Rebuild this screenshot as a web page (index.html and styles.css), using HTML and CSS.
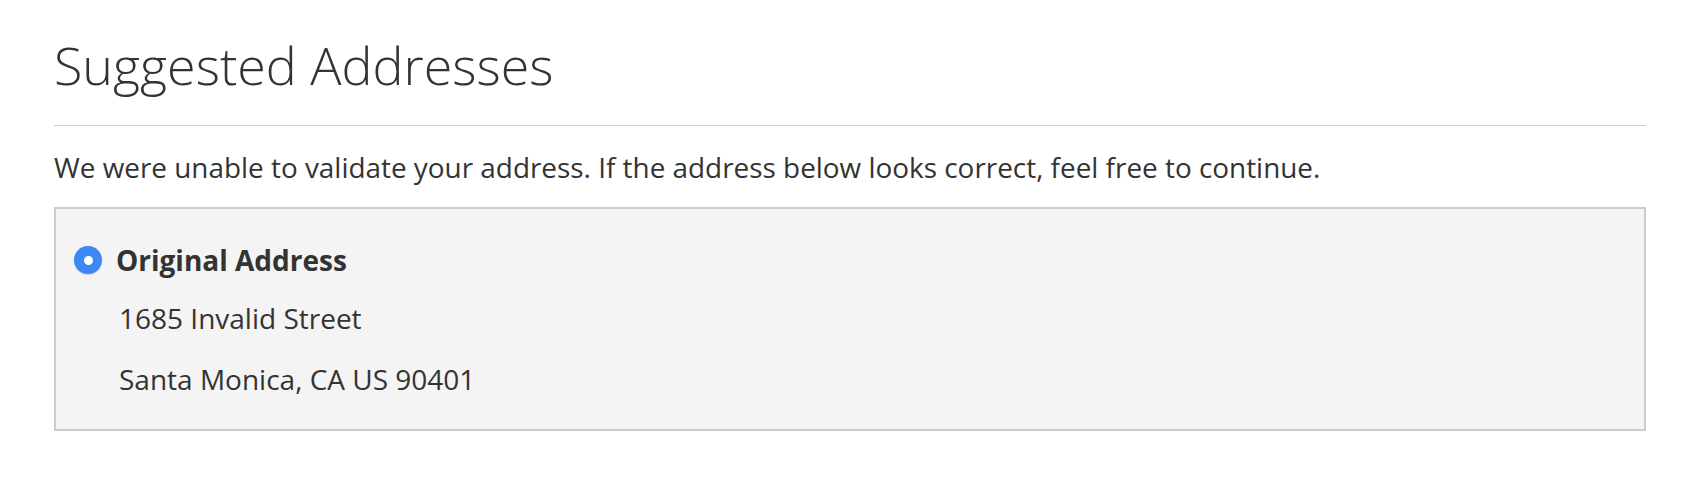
FILE: index.html
```html
<!DOCTYPE html>
<html lang="en">
<head>
<meta charset="utf-8">
<title>Suggested Addresses</title>
<link rel="stylesheet" href="styles.css">
</head>
<body>
<div class="page">
  <h1 class="title">Suggested Addresses</h1>
  <p class="message">We were unable to validate your address. If the address below looks correct, feel free to continue.</p>
  <div class="option-box">
    <label class="option">
      <span class="radio"><span class="radio-dot"></span></span>
      <span class="option-label">Original Address</span>
    </label>
    <div class="address">
      <div class="address-line">1685 Invalid Street</div>
      <div class="address-line">Santa Monica, CA US 90401</div>
    </div>
  </div>
</div>
</body>
</html>
```

FILE: styles.css
```css
html, body {
  margin: 0;
  padding: 0;
  background: #ffffff;
}
body {
  font-family: "Open Sans", "Liberation Sans", sans-serif;
  color: #333333;
}
.page {
  padding: 26px 52px 0 54px;
}
.title {
  margin: 0;
  font-size: 52px;
  font-weight: 300;
  line-height: 78px;
  color: #333333;
  padding-bottom: 21px;
  border-bottom: 1px solid #cccccc;
}
.message {
  margin: 0;
  padding: 21px 0 20px;
  font-size: 27.9px;
  line-height: 40px;
}
.option-box {
  background: #f4f4f4;
  border: 2px solid #cccccc;
  padding: 31px 30px 30px 18px;
}
.option {
  display: flex;
  align-items: center;
  gap: 14px;
  height: 40px;
}
.radio {
  width: 28px;
  height: 28px;
  border-radius: 50%;
  background: #3d87f7;
  box-shadow: 0 1px 1px rgba(0, 0, 0, 0.15);
  display: flex;
  align-items: center;
  justify-content: center;
  flex: none;
}
.radio-dot {
  width: 9px;
  height: 9px;
  border-radius: 50%;
  background: #ffffff;
}
.option-label {
  font-size: 28px;
  font-weight: 700;
  line-height: 40px;
}
.address {
  padding-left: 45px;
  padding-top: 18px;
}
.address-line {
  font-size: 28px;
  line-height: 40px;
}
.address-line + .address-line {
  margin-top: 21px;
}
```
